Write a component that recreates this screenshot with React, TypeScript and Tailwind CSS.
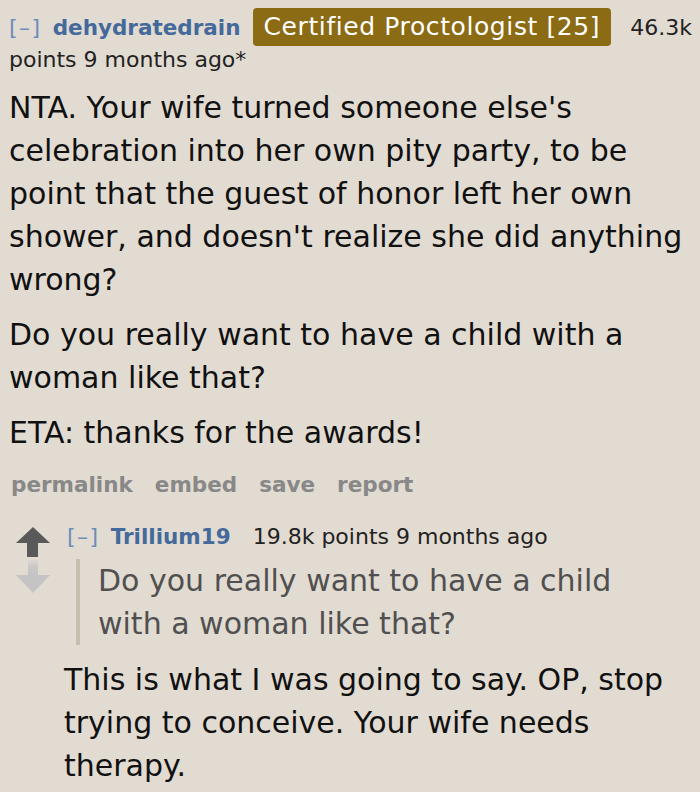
import React from "react";

const font = { fontFamily: '"DejaVu Sans", Verdana, sans-serif' };

function UpArrow() {
  return (
    <svg width="34" height="30" viewBox="0 0 34 30">
      <polygon points="17,0 34,16 0,16" fill="#595959" />
      <rect x="11" y="16" width="11" height="14" fill="#595959" />
    </svg>
  );
}

function DownArrow() {
  return (
    <svg width="34" height="33" viewBox="0 0 34 33">
      <defs>
        <linearGradient id="dg" x1="0" y1="0" x2="0" y2="1">
          <stop offset="0" stopColor="#dcd7d0" />
          <stop offset="0.45" stopColor="#c8c8c8" />
          <stop offset="1" stopColor="#c4c4c4" />
        </linearGradient>
      </defs>
      <rect x="12" y="0" width="10" height="16" fill="url(#dg)" />
      <polygon points="0,15 34,15 17,33" fill="#c4c4c4" />
    </svg>
  );
}

export default function App() {
  return (
    <div
      className="w-[700px] h-[792px] overflow-hidden bg-[#e2dbd1] pl-[9px] pt-[8px] text-[#222]"
      style={font}
    >
      {/* Top comment header */}
      <div className="flex items-center h-[38px] pt-[2px] text-[22px] leading-[26px] whitespace-nowrap">
        <span className="text-[#6d8dbb] tracking-[1.5px]">[–]</span>
        <span className="ml-[11px] text-[21.5px] font-bold text-[#44699b]">dehydratedrain</span>
        <span className="ml-[12px] h-[38px] -mt-[2px] flex items-center rounded-[4px] bg-[#8b6b13] px-[11px] text-[25px] tracking-[0.6px] text-white">
          Certified Proctologist [25]
        </span>
        <span className="ml-[19px] text-[#222]">46.3k</span>
      </div>
      <div className="mt-[1px] text-[22px] leading-[26px] text-[#222]">points 9 months ago*</div>

      {/* Top comment body */}
      <div className="mt-[13px] text-[30px] leading-[43px] text-[#111] pr-[6px]">
        <p className="mb-[12px]">
          NTA. Your wife turned someone else's celebration into her own pity party, to be point that the guest of honor left her own shower, and doesn't realize she did anything wrong?
        </p>
        <p className="mb-[12px]">Do you really want to have a child with a woman like that?</p>
        <p>ETA: thanks for the awards!</p>
      </div>

      {/* Actions */}
      <div className="mt-[18px] flex gap-[22px] pl-[2px] text-[21.5px] leading-[26px] font-bold text-[#888888]">
        <span>permalink</span>
        <span>embed</span>
        <span>save</span>
        <span>report</span>
      </div>

      {/* Child comment */}
      <div className="mt-[26px] flex">
        <div className="ml-[7px] w-[51px] shrink-0 flex flex-col pt-[3px]">
          <UpArrow />
          <div className="mt-[3px]">
            <DownArrow />
          </div>
        </div>
        <div className="flex-1">
          <div className="flex items-center text-[22px] leading-[26px] whitespace-nowrap">
            <span className="text-[#6d8dbb] tracking-[1.5px]">[–]</span>
            <span className="ml-[11px] text-[21.5px] font-bold text-[#44699b]">Trillium19</span>
            <span className="ml-[22px] text-[#222]">19.8k points 9 months ago</span>
          </div>
          <div className="mt-[9px] ml-[9px] mr-[50px] border-l-4 border-[#c6bfac] pl-[18px] text-[30px] leading-[43px] text-[#505050]">
            Do you really want to have a child with a woman like that?
          </div>
          <div className="mt-[13px] -ml-[3px] text-[30px] leading-[43px] text-[#111]">
            This is what I was going to say. OP, stop trying to conceive. Your wife needs therapy.
          </div>
        </div>
      </div>
    </div>
  );
}
